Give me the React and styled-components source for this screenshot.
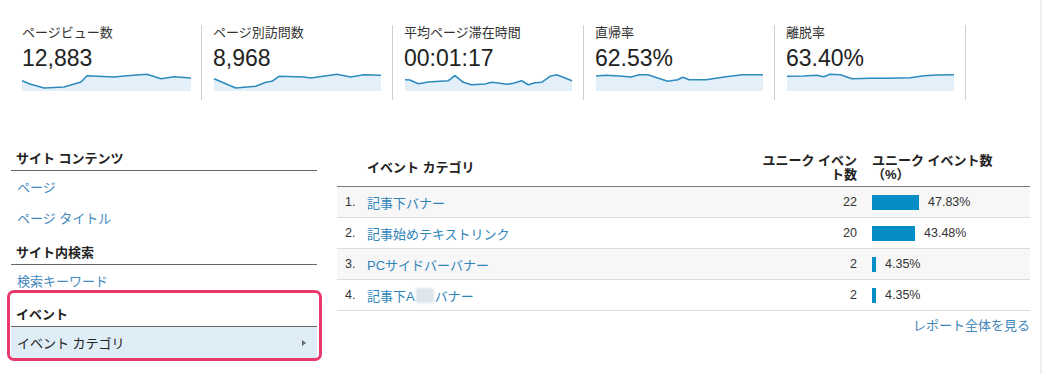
import React from 'react';
import styled, { createGlobalStyle } from 'styled-components';

const GlobalStyle = createGlobalStyle`
	html, body {
		margin: 0;
		padding: 0;
		background: #fff;
	}
	body {
		font-family: 'Liberation Sans', 'Noto Sans CJK JP', sans-serif;
		color: #222;
	}
`;

const metrics = [
	{
		label: 'ページビュー数',
		value: '12,883',
		points: [[0, 8.7], [8, 12], [22, 16], [42, 15], [59, 10], [65, 3.7], [92, 5], [105, 3.7], [125, 2.3], [139, 6.7], [152, 4.7], [169, 6]],
	},
	{
		label: 'ページ別訪問数',
		value: '8,968',
		points: [[1, 6.7], [22.7, 16], [42.7, 14.3], [52.7, 10.3], [59, 9.3], [66, 4.3], [91, 5], [97.7, 6], [124, 2.3], [137.7, 5], [151, 2.7], [168, 3.3]],
	},
	{
		label: '平均ページ滞在時間',
		value: '00:01:17',
		points: [[1, 7.7], [6, 8], [14.3, 11.7], [24.3, 10], [44.3, 8.7], [51, 3.7], [59.3, 10.3], [67.7, 12.7], [81, 12], [87.7, 10.3], [94.3, 11], [102.7, 12.3], [109.3, 11.3], [117.7, 8.7], [124.3, 12.7], [131, 10.7], [137.7, 10.3], [146, 4.3], [152.7, 2.7], [161, 6], [168, 8.7]],
	},
	{
		label: '直帰率',
		value: '62.53%',
		points: [[1, 4], [11, 3.3], [24.3, 4], [36, 5], [44.3, 2.7], [52.7, 2.7], [62.7, 6], [72.7, 9.3], [82.7, 7.7], [87.7, 5.3], [94.3, 7.7], [111, 7.7], [131, 4.7], [147.7, 2.7], [168, 2.7]],
	},
	{
		label: '離脱率',
		value: '63.40%',
		points: [[1, 4.3], [17.7, 4], [31, 3.3], [37.7, 4.7], [44.3, 2.3], [54.3, 2.7], [66, 6.7], [84.3, 6.3], [101, 6.3], [124.3, 5.7], [137.7, 3.7], [151, 3], [168, 2.7]],
	},
];

const rows = [
	{ name: '記事下バナー', count: 22, pct: 47.83 },
	{ name: '記事始めテキストリンク', count: 20, pct: 43.48 },
	{ name: 'PCサイドバーバナー', count: 2, pct: 4.35 },
	{ name: '記事下A', masked: true, rest: 'バナー', count: 2, pct: 4.35 },
];

function Sparkline({ points }) {
	const line = points.map(([x, y]) => `${x},${y}`).join(' ');
	const first = points[0];
	const last = points[points.length - 1];
	const area = `M${first[0]},19 L${line.split(' ').join(' L')} L${last[0]},19 Z`;
	return (
		<SparkSvg width='169' height='20' viewBox='0 0 169 20'>
			<path d={area} fill='#e3f0f9' />
			<polyline points={line} fill='none' stroke='#2f8bbd' strokeWidth='1.6' strokeLinejoin='round' />
		</SparkSvg>
	);
}

export default function App() {
	return (
		<Page>
			<GlobalStyle />
			<MetricRow>
				{metrics.map((m) => (
					<Metric key={m.label}>
						<MetricLabel>{m.label}</MetricLabel>
						<MetricValue>{m.value}</MetricValue>
						<Sparkline points={m.points} />
					</Metric>
				))}
			</MetricRow>

			<Bottom>
				<Nav>
					<NavHeading>サイト コンテンツ</NavHeading>
					<NavLink>ページ</NavLink>
					<NavLink>ページ タイトル</NavLink>
					<NavHeading>サイト内検索</NavHeading>
					<NavLink>検索キーワード</NavLink>
					<NavGroup>
						<NavHeading>イベント</NavHeading>
						<NavLink $active>
							イベント カテゴリ
							<Caret />
						</NavLink>
						<Highlight />
					</NavGroup>
				</Nav>

				<TableArea>
					<HeaderRow>
						<HeadCell $pad>イベント カテゴリ</HeadCell>
						<HeadCell $right>
							ユニーク イベン
							<br />
							ト数
						</HeadCell>
						<HeadCell $left>
							ユニーク イベント数
							<br />
							（%）
						</HeadCell>
					</HeaderRow>
					{rows.map((r, i) => (
						<Row key={i} $striped={i % 2 === 0}>
							<NameCell>
								<Index>{i + 1}.</Index>
								<RowLink>
									{r.name}
									{r.masked && <Mask />}
									{r.rest}
								</RowLink>
							</NameCell>
							<CountCell>{r.count}</CountCell>
							<PctCell>
								<Bar style={{ width: `${Math.max(4, Math.round(r.pct * 0.98))}px` }} />
								{r.pct.toFixed(2)}%
							</PctCell>
						</Row>
					))}
					<FullReport>レポート全体を見る</FullReport>
				</TableArea>
			</Bottom>
		</Page>
	);
}

const Page = styled.div`
	width: 1042px;
	min-height: 374px;
	box-sizing: border-box;
	border-right: 2px solid #efefef;
`;

const MetricRow = styled.div`
	display: flex;
	padding: 25px 0 0 11px;
`;

const Metric = styled.div`
	width: 191px;
	height: 75px;
	box-sizing: border-box;
	padding: 0 10px 0 11px;
	border-right: 1px solid #cfcfcf;
`;

const MetricLabel = styled.div`
	font-size: 13px;
	line-height: 16px;
	color: #333;
`;

const MetricValue = styled.div`
	margin-top: 4px;
	font-size: 23px;
	line-height: 26px;
	color: #222;
`;

const SparkSvg = styled.svg`
	display: block;
	margin-top: 1px;
`;

const Bottom = styled.div`
	display: flex;
	gap: 20px;
	margin-top: 39px;
	padding: 0 10px 0 11px;
`;

const Nav = styled.div`
	width: 306px;
	flex-shrink: 0;
`;

const NavHeading = styled.div`
	padding: 12px 0 3px 5px;
	font-size: 13px;
	line-height: 16px;
	font-weight: bold;
	color: #222;
	border-bottom: 1px solid #666;
`;

const NavLink = styled.div`
	display: flex;
	align-items: center;
	justify-content: space-between;
	height: 31px;
	padding: 0 11px 0 6px;
	font-size: 13px;
	color: ${({ $active }) => ($active ? '#222' : '#4389bd')};
	background: ${({ $active }) => ($active ? '#deedf6' : 'transparent')};
`;

const Caret = styled.span`
	width: 0;
	height: 0;
	border-left: 4px solid #666;
	border-top: 3.5px solid transparent;
	border-bottom: 3.5px solid transparent;
`;

const NavGroup = styled.div`
	position: relative;
	margin-top: -1px;
`;

const Highlight = styled.div`
	position: absolute;
	top: -5px;
	bottom: -3px;
	left: -4px;
	right: -5px;
	border: 3px solid #e8386c;
	border-radius: 7px;
	pointer-events: none;
`;

const TableArea = styled.div`
	flex: 1;
	margin-top: 10px;
`;

const HeaderRow = styled.div`
	display: grid;
	grid-template-columns: 1fr 104px 165px;
	align-items: center;
	height: 37px;
	border-bottom: 1px solid #7a7a7a;
`;

const HeadCell = styled.div`
	font-size: 13px;
	line-height: 14px;
	font-weight: bold;
	color: #222;
	padding-left: ${({ $pad, $left }) => ($pad ? '30px' : $left ? '7px' : '0')};
	padding-right: ${({ $right }) => ($right ? '8px' : '0')};
	text-align: ${({ $right }) => ($right ? 'right' : 'left')};
`;

const Row = styled.div`
	display: grid;
	grid-template-columns: 1fr 104px 165px;
	align-items: center;
	height: 30px;
	border-bottom: 1px solid #dcdcdc;
	background: ${({ $striped }) => ($striped ? '#f7f7f7' : '#fff')};
	font-size: 13px;
`;

const NameCell = styled.div`
	display: flex;
	align-items: center;
	padding-left: 8px;
`;

const Index = styled.span`
	width: 22px;
	color: #333;
	font-size: 12.5px;
`;

const RowLink = styled.span`
	display: inline-flex;
	align-items: center;
	color: #2f84ba;
`;

const Mask = styled.span`
	display: inline-block;
	width: 18px;
	height: 15px;
	margin: 0 1px;
	background: #dce6ec;
	filter: blur(1px);
`;

const CountCell = styled.div`
	text-align: right;
	padding-right: 8px;
	color: #333;
	font-size: 12.5px;
`;

const PctCell = styled.div`
	display: flex;
	align-items: center;
	gap: 9px;
	padding-left: 7px;
	color: #333;
	font-size: 12.5px;
`;

const Bar = styled.span`
	display: block;
	height: 15px;
	background: #058dc7;
`;

const FullReport = styled.div`
	margin-top: 7px;
	text-align: right;
	font-size: 13px;
	line-height: 16px;
	color: #3f86b8;
`;
